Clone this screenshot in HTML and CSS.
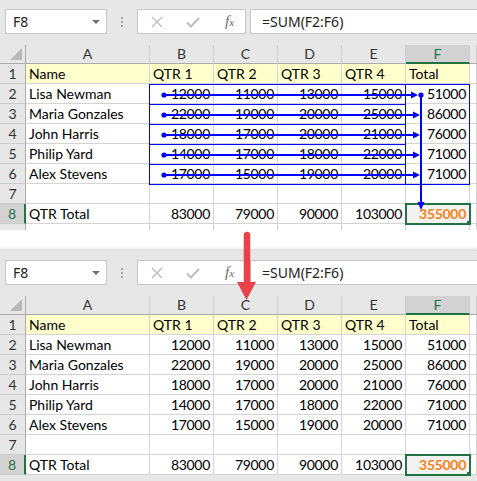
FILE: index.html
```html
<!DOCTYPE html>
<html>
<head>
	<title>SUM trace precedents</title>
	<link rel="stylesheet" href="styles.css">
</head>
<body>
<div class="page">

	<!-- sheet with trace arrows -->
	<section class="sheet">
		<div class="formula-bar">
			<div class="name-box">F8<span class="caret"></span></div>
			<div class="grip"><i></i><i></i><i></i></div>
			<div class="fx-buttons">
				<svg class="fx-icon" width="12" height="12" viewBox="0 0 12 12"><path d="M1 1 L11 11 M11 1 L1 11" stroke="#bdbdbd" stroke-width="1.4" fill="none"/></svg>
				<svg class="fx-icon" width="14" height="12" viewBox="0 0 14 12"><path d="M1 6.5 L5 10.5 L13 2" stroke="#bdbdbd" stroke-width="2" fill="none"/></svg>
				<span class="fx">f<small>x</small></span>
			</div>
			<div class="formula-input">=SUM(F2:F6)</div>
		</div>

		<div class="grid-row head-row">
			<div class="ch corner"></div><div class="ch">A</div><div class="ch">B</div><div class="ch">C</div><div class="ch">D</div><div class="ch">E</div><div class="ch active">F</div><div class="ch"></div>
		</div>
		<div class="grid-row title-row">
			<div class="rh">1</div><div class="cell">Name</div><div class="cell">QTR 1</div><div class="cell">QTR 2</div><div class="cell">QTR 3</div><div class="cell">QTR 4</div><div class="cell">Total</div><div class="cell blank"></div>
		</div>
		<div class="grid-row">
			<div class="rh">2</div><div class="cell">Lisa Newman</div><div class="cell num">12000</div><div class="cell num">11000</div><div class="cell num">13000</div><div class="cell num">15000</div><div class="cell num">51000</div><div class="cell"></div>
		</div>
		<div class="grid-row">
			<div class="rh">3</div><div class="cell">Maria Gonzales</div><div class="cell num">22000</div><div class="cell num">19000</div><div class="cell num">20000</div><div class="cell num">25000</div><div class="cell num">86000</div><div class="cell"></div>
		</div>
		<div class="grid-row">
			<div class="rh">4</div><div class="cell">John Harris</div><div class="cell num">18000</div><div class="cell num">17000</div><div class="cell num">20000</div><div class="cell num">21000</div><div class="cell num">76000</div><div class="cell"></div>
		</div>
		<div class="grid-row">
			<div class="rh">5</div><div class="cell">Philip Yard</div><div class="cell num">14000</div><div class="cell num">17000</div><div class="cell num">18000</div><div class="cell num">22000</div><div class="cell num">71000</div><div class="cell"></div>
		</div>
		<div class="grid-row">
			<div class="rh">6</div><div class="cell">Alex Stevens</div><div class="cell num">17000</div><div class="cell num">15000</div><div class="cell num">19000</div><div class="cell num">20000</div><div class="cell num">71000</div><div class="cell"></div>
		</div>
		<div class="grid-row">
			<div class="rh">7</div><div class="cell"></div><div class="cell"></div><div class="cell"></div><div class="cell"></div><div class="cell"></div><div class="cell"></div><div class="cell"></div>
		</div>
		<div class="grid-row">
			<div class="rh active">8</div><div class="cell">QTR Total</div><div class="cell num">83000</div><div class="cell num">79000</div><div class="cell num">90000</div><div class="cell num">103000</div><div class="cell num selected">355000</div><div class="cell"></div>
		</div>
		<div class="grid-row">
			<div class="rh"></div><div class="cell"></div><div class="cell"></div><div class="cell"></div><div class="cell"></div><div class="cell"></div><div class="cell"></div><div class="cell"></div>
		</div>

		<!-- trace precedents overlay -->
		<svg class="trace" width="477" height="230" viewBox="0 0 477 230">
			<g fill="none" stroke="#0000ff" stroke-width="1">
				<rect x="149.5" y="84.5" width="256" height="20"/>
				<rect x="149.5" y="104.5" width="256" height="20"/>
				<rect x="149.5" y="124.5" width="256" height="20"/>
				<rect x="149.5" y="144.5" width="256" height="20"/>
				<rect x="149.5" y="164.5" width="256" height="20"/>
				<rect x="405.5" y="84.5" width="64" height="100"/>
			</g>
			<g stroke="#0000ff" stroke-width="2">
				<line x1="164" y1="95" x2="413" y2="95"/>
				<line x1="164" y1="115" x2="415" y2="115"/>
				<line x1="164" y1="135" x2="415" y2="135"/>
				<line x1="164" y1="155" x2="415" y2="155"/>
				<line x1="164" y1="175" x2="415" y2="175"/>
				<line x1="421" y1="95" x2="421" y2="204"/>
			</g>
			<g fill="#0000ff">
				<circle cx="164" cy="95" r="2.6"/>
				<circle cx="164" cy="115" r="2.6"/>
				<circle cx="164" cy="135" r="2.6"/>
				<circle cx="164" cy="155" r="2.6"/>
				<circle cx="164" cy="175" r="2.6"/>
				<circle cx="421" cy="95" r="2.6"/>
				<polygon points="411,91.5 418,95 411,98.5"/>
				<polygon points="413,111.5 420,115 413,118.5"/>
				<polygon points="413,131.5 420,135 413,138.5"/>
				<polygon points="413,151.5 420,155 413,158.5"/>
				<polygon points="413,171.5 420,175 413,178.5"/>
				<polygon points="417.5,202 424.5,202 421,210"/>
			</g>
		</svg>
	</section>

	<div class="gap"></div>

	<!-- same sheet, plain -->
	<section class="sheet">
		<div class="formula-bar">
			<div class="name-box">F8<span class="caret"></span></div>
			<div class="grip"><i></i><i></i><i></i></div>
			<div class="fx-buttons">
				<svg class="fx-icon" width="12" height="12" viewBox="0 0 12 12"><path d="M1 1 L11 11 M11 1 L1 11" stroke="#bdbdbd" stroke-width="1.4" fill="none"/></svg>
				<svg class="fx-icon" width="14" height="12" viewBox="0 0 14 12"><path d="M1 6.5 L5 10.5 L13 2" stroke="#bdbdbd" stroke-width="2" fill="none"/></svg>
				<span class="fx">f<small>x</small></span>
			</div>
			<div class="formula-input">=SUM(F2:F6)</div>
		</div>

		<div class="grid-row head-row">
			<div class="ch corner"></div><div class="ch">A</div><div class="ch">B</div><div class="ch">C</div><div class="ch">D</div><div class="ch">E</div><div class="ch active">F</div><div class="ch"></div>
		</div>
		<div class="grid-row title-row">
			<div class="rh">1</div><div class="cell">Name</div><div class="cell">QTR 1</div><div class="cell">QTR 2</div><div class="cell">QTR 3</div><div class="cell">QTR 4</div><div class="cell">Total</div><div class="cell blank"></div>
		</div>
		<div class="grid-row">
			<div class="rh">2</div><div class="cell">Lisa Newman</div><div class="cell num">12000</div><div class="cell num">11000</div><div class="cell num">13000</div><div class="cell num">15000</div><div class="cell num">51000</div><div class="cell"></div>
		</div>
		<div class="grid-row">
			<div class="rh">3</div><div class="cell">Maria Gonzales</div><div class="cell num">22000</div><div class="cell num">19000</div><div class="cell num">20000</div><div class="cell num">25000</div><div class="cell num">86000</div><div class="cell"></div>
		</div>
		<div class="grid-row">
			<div class="rh">4</div><div class="cell">John Harris</div><div class="cell num">18000</div><div class="cell num">17000</div><div class="cell num">20000</div><div class="cell num">21000</div><div class="cell num">76000</div><div class="cell"></div>
		</div>
		<div class="grid-row">
			<div class="rh">5</div><div class="cell">Philip Yard</div><div class="cell num">14000</div><div class="cell num">17000</div><div class="cell num">18000</div><div class="cell num">22000</div><div class="cell num">71000</div><div class="cell"></div>
		</div>
		<div class="grid-row">
			<div class="rh">6</div><div class="cell">Alex Stevens</div><div class="cell num">17000</div><div class="cell num">15000</div><div class="cell num">19000</div><div class="cell num">20000</div><div class="cell num">71000</div><div class="cell"></div>
		</div>
		<div class="grid-row">
			<div class="rh">7</div><div class="cell"></div><div class="cell"></div><div class="cell"></div><div class="cell"></div><div class="cell"></div><div class="cell"></div><div class="cell"></div>
		</div>
		<div class="grid-row">
			<div class="rh active">8</div><div class="cell">QTR Total</div><div class="cell num">83000</div><div class="cell num">79000</div><div class="cell num">90000</div><div class="cell num">103000</div><div class="cell num selected">355000</div><div class="cell"></div>
		</div>
	</section>

	<!-- red arrow between the two shots -->
	<svg class="red-arrow" width="24" height="74" viewBox="0 0 24 74">
		<line x1="12" y1="4" x2="12" y2="54" stroke="#e8434a" stroke-width="6.5" stroke-linecap="round"/>
		<polygon points="2,51 21,51 11.5,69" fill="#e8434a"/>
	</svg>
</div>
</body>
</html>
```

FILE: styles.css
```css
body {
	margin: 0;
	padding: 0;
	background: #fff;
	font-family: Lato, "Liberation Sans", sans-serif;
	font-size: 14px;
	color: #000;
}

.page {
	position: relative;
	width: 477px;
	height: 481px;
	overflow: hidden;
}

.sheet {
	position: relative;
	height: 230px;
	overflow: hidden;
	background: #e7e7e7;
}

.gap {
	height: 21px;
	background: linear-gradient(to bottom, #fff 0, #fff 17px, #d9d9d9 21px);
}

/* formula bar */

.formula-bar {
	display: flex;
	align-items: center;
	height: 45px;
	padding: 0 0 2px 5px;
	box-sizing: border-box;
	font-family: "Noto Sans", "Liberation Sans", sans-serif;
}

.name-box,
.fx-buttons,
.formula-input {
	height: 25px;
	box-sizing: border-box;
	background: #fff;
	border: 1px solid #c6c6c6;
}

.name-box {
	position: relative;
	width: 102px;
	padding-left: 7px;
	line-height: 23px;
	font-size: 14px;
	color: #222;
}

.caret {
	position: absolute;
	right: 6px;
	top: 10px;
	border-left: 4px solid transparent;
	border-right: 4px solid transparent;
	border-top: 4px solid #707070;
}

.grip {
	width: 30px;
	display: flex;
	flex-direction: column;
	align-items: center;
	gap: 2px;
}

.grip i {
	width: 2px;
	height: 2px;
	background: #a6a6a6;
}

.fx-buttons {
	width: 109px;
	display: flex;
	align-items: center;
	padding-left: 13px;
	gap: 23px;
}

.fx {
	margin-left: 2px;
	font-family: "Liberation Serif", serif;
	font-style: italic;
	font-size: 15px;
	color: #6a6a6a;
}

.fx small {
	font-size: 11px;
}

.formula-input {
	flex: 1;
	margin-left: 4px;
	margin-right: -4px;
	padding-left: 11px;
	line-height: 23px;
	font-size: 14px;
	color: #222;
}

/* grid */

.grid-row {
	display: grid;
	grid-template-columns: 26px 124px 64px 64px 64px 64px 64px 1fr;
	height: 20px;
	background: #fff;
}

.head-row {
	height: 19px;
	background: #e7e7e7;
}

.ch,
.rh,
.cell {
	box-sizing: border-box;
	line-height: 19px;
	white-space: nowrap;
	overflow: hidden;
}

.ch {
	border-right: 1px solid #cdcdcd;
	border-bottom: 1px solid #ababab;
	text-align: center;
	color: #333;
	line-height: 18px;
}

.ch.active {
	background: #d2d2d2;
	color: #217346;
	border-bottom: 2px solid #217346;
}

.corner {
	position: relative;
	border-right-color: #ababab;
}

.corner::after {
	content: "";
	position: absolute;
	right: 3px;
	bottom: 3px;
	border-left: 12px solid transparent;
	border-bottom: 12px solid #b8b8b8;
}

.rh {
	background: #e7e7e7;
	border-right: 1px solid #ababab;
	border-bottom: 1px solid #cdcdcd;
	text-align: center;
	color: #333;
}

.rh.active {
	background: #d2d2d2;
	color: #217346;
	border-right: 2px solid #217346;
}

.cell {
	border-right: 1px solid #d4d4d4;
	border-bottom: 1px solid #d4d4d4;
	padding: 0 3px;
}

.title-row .cell {
	background: #ffffcc;
}

.title-row .cell.blank {
	background: #fff;
}

.num {
	text-align: right;
	letter-spacing: -0.3px;
}

.selected {
	position: relative;
	z-index: 1;
	background: #f2f2f2;
	color: #f58220;
	font-weight: bold;
	outline: 2px solid #217346;
	outline-offset: -1px;
}

.selected::after {
	content: "";
	position: absolute;
	right: -3px;
	bottom: -3px;
	width: 5px;
	height: 5px;
	background: #217346;
}

/* overlays */

.trace {
	position: absolute;
	left: 0;
	top: 0;
	z-index: 2;
}

.red-arrow {
	position: absolute;
	left: 235px;
	top: 231px;
	z-index: 3;
}
```
